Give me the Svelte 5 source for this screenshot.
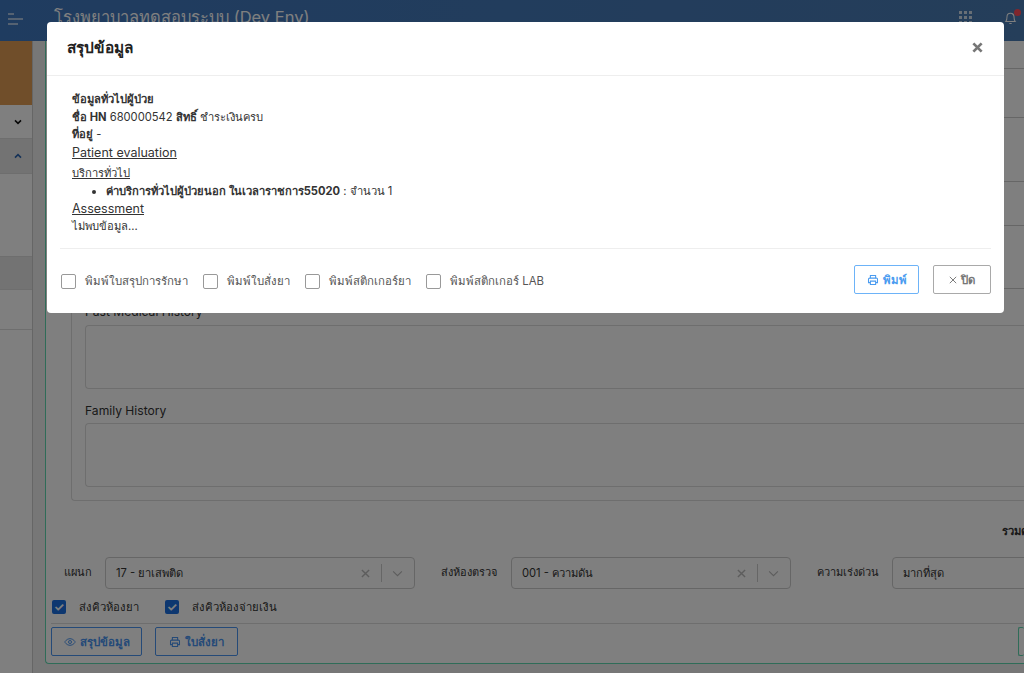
<script lang="ts">
	const checks = ['พิมพ์ใบสรุปการรักษา', 'พิมพ์ใบสั่งยา', 'พิมพ์สติกเกอร์ยา', 'พิมพ์สติกเกอร์ LAB'];
	const rowHeights = [28, 49, 64, 44, 63];
</script>

{#snippet printer()}
	<svg class="icon" viewBox="0 0 16 16" fill="none" stroke="currentColor" stroke-width="1.4">
		<path d="M4.5 5.500V2h7v3.500" />
		<path d="M4.500 11.500H2V7a1.500 1.500 0 0 1 1.500-1.500h9A1.500 1.500 0 0 1 14 7v4.500h-2.500" />
		<path d="M4.500 9.500h7V14h-7z" />
	</svg>
{/snippet}

{#snippet selectControls()}
	<svg class="sel-x" viewBox="0 0 10 10" fill="none" stroke="currentColor" stroke-width="1.6"><path d="M1 1l8 8M9 1l-8 8" /></svg>
	<span class="sel-sep"></span>
	<svg class="sel-chev" viewBox="0 0 12 8" fill="none" stroke="currentColor" stroke-width="1.3"><path d="M1 1.500l5 5 5-5" /></svg>
{/snippet}

<div class="page">
	<header class="topbar">
		<svg class="burger" viewBox="0 0 16 12" fill="none" stroke="currentColor" stroke-width="1.3">
			<path d="M0 1h6M0 6h15M0 11h10" />
		</svg>
		<span class="brand">โรงพยาบาลทดสอบระบบ (Dev Env)</span>
		<span class="grid-icon">
			{#each Array(9) as _}<i></i>{/each}
		</span>
		<span class="bell">
			<svg viewBox="0 0 16 18" fill="none" stroke="currentColor" stroke-width="1.3">
				<path d="M2 13.500c1.500-1.500 1.500-3 1.500-6a4.500 4.500 0 0 1 9 0c0 3 0 4.500 1.500 6zM6.500 16h3" />
			</svg>
			<b></b>
		</span>
	</header>

	<div class="body">
		<aside class="side">
			<div class="banner"></div>
			<div class="side-row h34">
				<svg viewBox="0 0 12 8" fill="none" stroke="#111" stroke-width="2.4"><path d="M1.500 1.500l4.500 4.500 4.500-4.500" /></svg>
			</div>
			<div class="side-row h35 dark">
				<svg viewBox="0 0 12 8" fill="none" stroke="#2a64b0" stroke-width="2.4"><path d="M1.500 6.500l4.500-4.500 4.500 4.500" /></svg>
			</div>
			<div class="side-row h83"></div>
			<div class="side-row h33 dark"></div>
			<div class="side-row h40"></div>
		</aside>

		<main class="content">
			<div class="panel">
				<div class="rows">
					{#each rowHeights as h}
						<div class="row-line" style="height: {h}px"></div>
					{/each}
				</div>
				<div class="history">
					<label class="hist-label" for="pmh">Past Medical History</label>
					<div id="pmh" class="area"></div>
					<label class="hist-label second" for="fh">Family History</label>
					<div id="fh" class="area"></div>
				</div>
				<div class="total">รวมค่าใช้จ่าย</div>
				<div class="form-row">
					<span class="f-label first">แผนก</span>
					<div class="select s1"><span>17 - ยาเสพติด</span>{@render selectControls()}</div>
					<span class="f-label l2">ส่งห้องตรวจ</span>
					<div class="select s2"><span>001 - ความดัน</span>{@render selectControls()}</div>
					<span class="f-label l3">ความเร่งด่วน</span>
					<div class="select s3"><span>มากที่สุด</span></div>
				</div>
				<div class="queue-row">
					<span class="q-check"><i class="ticked">✓</i>ส่งคิวห้องยา</span>
					<span class="q-check"><i class="ticked">✓</i>ส่งคิวห้องจ่ายเงิน</span>
				</div>
				<div class="action-row">
					<span class="bg-btn">
						<svg class="icon" viewBox="0 0 16 16" fill="none" stroke="currentColor" stroke-width="1.3">
							<path d="M1 8s2.500-4.500 7-4.500S15 8 15 8s-2.500 4.500-7 4.500S1 8 1 8z" /><circle cx="8" cy="8" r="2" />
						</svg>สรุปข้อมูล
					</span>
					<span class="bg-btn narrow">{@render printer()}ใบสั่งยา</span>
					<span class="bg-btn green"></span>
				</div>
			</div>
		</main>
	</div>

	<div class="backdrop"></div>

	<div class="modal">
		<div class="modal-head">
			<h2>สรุปข้อมูล</h2>
			<svg class="close" viewBox="0 0 12 12" fill="none" stroke="currentColor" stroke-width="3"><path d="M1.500 1.500l9 9M10.500 1.500l-9 9" /></svg>
		</div>
		<div class="modal-body">
			<div><b>ข้อมูลทั่วไปผู้ป่วย</b></div>
			<div><b>ชื่อ HN</b> 680000542 <b>สิทธิ์</b> ชำระเงินครบ</div>
			<div><b>ที่อยู่</b> -</div>
			<div class="u latin">Patient evaluation</div>
			<div class="u service">บริการทั่วไป</div>
			<ul><li><b>ค่าบริการทั่วไปผู้ป่วยนอก ในเวลาราชการ55020</b> : จำนวน 1</li></ul>
			<div class="u latin">Assessment</div>
			<div>ไม่พบข้อมูล...</div>
		</div>
		<div class="modal-foot">
			{#each checks as c}
				<span class="check"><i></i>{c}</span>
			{/each}
			<span class="btn print">{@render printer()}พิมพ์</span>
			<span class="btn shut"><svg class="shut-x" viewBox="0 0 10 10" fill="none" stroke="currentColor" stroke-width="1.200"><path d="M1 1l8 8M9 1l-8 8" /></svg>ปิด</span>
		</div>
	</div>
</div>

<style>
	:global(body) {
		margin: 0;
	}

	.page {
		position: relative;
		width: 1024px;
		height: 673px;
		overflow: hidden;
		background: #fff;
		color: #333;
		font-family: Inter, 'Noto Sans', 'Noto Sans CJK SC', sans-serif;
		font-size: 11.2px;
	}

	.topbar {
		height: 41px;
		background: linear-gradient(90deg, #3f78c0, #4a7cb4);
		color: #fff;
		display: flex;
		align-items: center;
		padding: 0 7px 0 8px;
		box-sizing: border-box;
	}

	.burger {
		width: 16px;
		height: 12px;
		margin: -3px 30px 0 0;
		opacity: 0.75;
	}

	.brand {
		font-size: 16.5px;
		flex: 1;
		margin-top: -7px;
	}

	.grid-icon {
		display: grid;
		grid-template-columns: repeat(3, 3px);
		gap: 2px;
		margin-right: 32px;
		margin-top: -6px;
		opacity: 0.75;
	}

	.grid-icon i {
		width: 3px;
		height: 3px;
		background: #fff;
	}

	.bell {
		position: relative;
		width: 13px;
		height: 14px;
		margin-top: -5px;
	}

	.bell svg {
		width: 13px;
		height: 14px;
		display: block;
	}

	.bell b {
		position: absolute;
		top: -2px;
		right: -4px;
		width: 7px;
		height: 7px;
		border-radius: 50%;
		background: #ff4d5a;
	}

	.body {
		display: flex;
		height: 632px;
	}

	.side {
		width: 33px;
		flex: none;
		background: #fff;
		border-right: 1px solid #ccc;
		box-sizing: border-box;
	}

	.banner {
		height: 64px;
		background: #e09c55;
	}

	.side-row {
		border-bottom: 1px solid #ddd;
		box-sizing: border-box;
		display: flex;
		align-items: center;
		justify-content: flex-end;
		padding-right: 10px;
	}

	.side-row svg {
		width: 8px;
		height: 6px;
	}

	.h34 {
		height: 34px;
	}

	.h35 {
		height: 35px;
	}

	.h83 {
		height: 83px;
	}

	.h33 {
		height: 33px;
	}

	.h40 {
		height: 40px;
	}

	.dark {
		background: #e6e6e6;
	}

	.content {
		flex: 1;
		padding: 0 0 9px 12px;
		min-width: 0;
		background: #eee;
	}

	.panel {
		height: 100%;
		box-sizing: border-box;
		background: #fff;
		border: 1px solid #5fd8b0;
		border-top: 0;
		border-right: 0;
		border-radius: 0 0 0 4px;
		padding: 0 0 0 6px;
		display: flex;
		flex-direction: column;
	}

	.rows {
		height: 248px;
		flex: none;
	}

	.row-line {
		box-sizing: border-box;
		border-bottom: 1px solid #ccc;
	}

	.history {
		margin: 0 0 0 19px;
		height: 212px;
		flex: none;
		border: 1px solid #ddd;
		border-top: 0;
		border-right: 0;
		border-radius: 0 0 0 4px;
		box-sizing: border-box;
		padding: 0 0 0 13px;
		display: flex;
		flex-direction: column;
	}

	.hist-label {
		font-size: 12.1px;
		line-height: 20px;
		margin: 13px 0 3px;
		color: #333;
	}

	.hist-label.second {
		margin: 12px 0 2px;
	}

	.area {
		height: 64px;
		flex: none;
		box-sizing: border-box;
		border: 1px solid #ddd;
		border-right: 0;
		border-radius: 4px 0 0 4px;
	}

	.total {
		font-weight: 700;
		margin-top: 21px;
		white-space: nowrap;
		overflow: hidden;
		padding-left: 950px;
		height: 18px;
		line-height: 18px;
		flex: none;
	}

	.form-row {
		display: flex;
		align-items: center;
		margin-top: 17px;
		flex: none;
	}

	.f-label {
		font-size: 11px;
		box-sizing: border-box;
		padding-left: 26px;
		white-space: nowrap;
		flex: none;
		margin-top: -3px;
	}

	.f-label.first {
		width: 53px;
		padding-left: 12px;
	}

	.f-label.l2 {
		width: 96px;
	}

	.f-label.l3 {
		width: 101px;
	}

	.select {
		height: 32px;
		border: 1px solid #ccc;
		border-radius: 4px;
		box-sizing: border-box;
		display: flex;
		align-items: center;
		padding: 0 11px 0 10px;
		flex: none;
	}

	.select span:first-child {
		flex: 1;
	}

	.s1 {
		width: 310px;
	}

	.s2 {
		width: 280px;
	}

	.s3 {
		width: 200px;
	}

	.sel-x {
		color: #bbb;
		width: 9px;
		height: 9px;
		margin-right: 11px;
	}

	.sel-sep {
		width: 1px;
		height: 18px;
		background: #ccc;
		margin-right: 10px;
	}

	.sel-chev {
		width: 11px;
		height: 7px;
		color: #bbb;
	}

	.queue-row {
		display: flex;
		gap: 26px;
		margin: 11px 0 0 0;
		height: 14px;
		flex: none;
	}

	.q-check {
		display: flex;
		align-items: center;
		gap: 13px;
		font-size: 11.3px;
		line-height: 14px;
	}

	.ticked {
		width: 14px;
		height: 14px;
		border-radius: 2px;
		background: #1b6fe0;
		color: #fff;
		font-style: normal;
		font-size: 12px;
		font-weight: 700;
		display: grid;
		place-items: center;
	}

	.action-row {
		border-top: 1px solid #ddd;
		margin: 9px 0 0 -1px;
		padding-top: 3px;
		display: flex;
		gap: 13px;
		flex: none;
	}

	.bg-btn {
		width: 91px;
		height: 29px;
		box-sizing: border-box;
		border: 1px solid #4a94f0;
		border-radius: 2px;
		color: #4a94f0;
		font-weight: 600;
		font-size: 11.5px;
		display: flex;
		align-items: center;
		justify-content: center;
		gap: 4px;
	}

	.bg-btn.narrow {
		width: 83px;
	}

	.bg-btn.green {
		margin-left: auto;
		width: 6px;
		border-color: #5fd8b0;
		border-right: 0;
	}

	.icon {
		width: 12px;
		height: 12px;
		flex: none;
	}

	.backdrop {
		position: absolute;
		inset: 0;
		background: rgba(0, 0, 0, 0.5);
	}

	.modal {
		position: absolute;
		left: 47px;
		top: 22px;
		width: 957px;
		height: 291px;
		background: #fff;
		border-radius: 4px;
		display: flex;
		flex-direction: column;
	}

	.modal-head {
		height: 54px;
		flex: none;
		box-sizing: border-box;
		border-bottom: 1px solid #eee;
		display: flex;
		align-items: center;
		justify-content: space-between;
		padding: 0 21px 3px 20px;
	}

	.modal-head h2 {
		margin: 0;
		font-size: 15.4px;
		font-weight: 700;
		color: #222;
	}

	.close {
		width: 11px;
		height: 11px;
		color: #777;
	}

	.modal-body {
		margin: 0 13px;
		padding: 15px 12px 0;
		height: 173px;
		box-sizing: border-box;
		border-bottom: 1px solid #eee;
		line-height: 17.5px;
		color: #333;
		flex: none;
	}

	.u {
		text-decoration: underline;
	}

	.latin {
		font-size: 12.5px;
	}

	.service {
		margin-top: 4px;
	}

	.modal-body ul {
		margin: 0;
		padding-left: 34px;
	}

	.modal-foot {
		flex: 1;
		display: flex;
		align-items: center;
		padding: 0 13px 0 14px;
		color: #555;
		font-size: 11.4px;
	}

	.check {
		display: flex;
		align-items: center;
		gap: 9px;
		white-space: nowrap;
		margin-right: 15px;
	}

	.check i {
		width: 15px;
		height: 15px;
		box-sizing: border-box;
		border: 1px solid #999;
		border-radius: 2px;
	}

	.btn {
		height: 29px;
		box-sizing: border-box;
		border-radius: 2px;
		display: flex;
		align-items: center;
		justify-content: center;
		gap: 4px;
		font-weight: 600;
		margin-bottom: 3px;
	}

	.print {
		width: 65px;
		margin-left: auto;
		margin-right: 14px;
		border: 1px solid #6db3f8;
		color: #4a9bf0;
	}

	.shut {
		width: 58px;
		border: 1px solid #a9a9a9;
		color: #777;
	}

	.shut-x {
		width: 8px;
		height: 8px;
	}
</style>
